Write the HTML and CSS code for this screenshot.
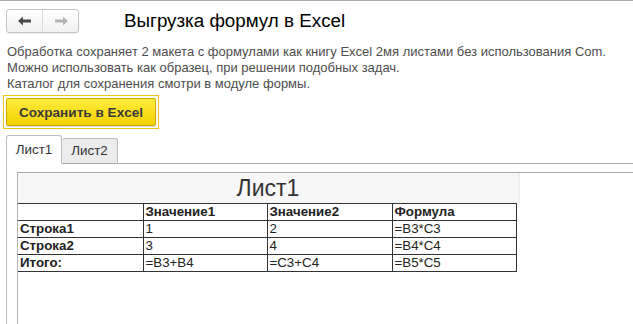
FILE: index.html
```html
<!DOCTYPE html>
<html lang="ru">
<head>
<meta charset="utf-8">
<link rel="stylesheet" href="styles.css">
</head>
<body>
<div class="page">
  <div class="header">
    <div class="nav">
      <span class="nav-btn">
        <svg width="14" height="10" viewBox="0 0 14 10"><path d="M0 5 L5 0.5 L5 3.5 L13 3.5 L13 6.5 L5 6.5 L5 9.5 Z" fill="#4a4a4a"/></svg>
      </span>
      <span class="nav-btn">
        <svg width="14" height="10" viewBox="0 0 14 10"><path d="M14 5 L9 0.5 L9 3.5 L1 3.5 L1 6.5 L9 6.5 L9 9.5 Z" fill="#b4b4b4"/></svg>
      </span>
    </div>
    <h1 class="title">Выгрузка формул в Excel</h1>
  </div>
  <div class="desc">
    <div>Обработка сохраняет 2 макета с формулами как книгу Excel 2мя листами без использования Com.</div>
    <div>Можно использовать как образец, при решении подобных задач.</div>
    <div>Каталог для сохранения смотри в модуле формы.</div>
  </div>
  <div class="focus">
    <button class="save">Сохранить в Excel</button>
  </div>
  <div class="tabs">
    <div class="tab active">Лист1</div>
    <div class="tab">Лист2</div>
    <div class="tab-fill"></div>
  </div>
  <div class="pane">
    <div class="sheet">
      <div class="sheet-head">Лист1</div>
      <table class="grid">
        <colgroup><col class="c0"><col class="c1"><col class="c2"><col class="c3"></colgroup>
        <tr class="b"><td></td><td>Значение1</td><td>Значение2</td><td>Формула</td></tr>
        <tr><td class="b">Строка1</td><td>1</td><td>2</td><td>=B3*C3</td></tr>
        <tr><td class="b">Строка2</td><td>3</td><td>4</td><td>=B4*C4</td></tr>
        <tr><td class="b">Итого:</td><td>=B3+B4</td><td>=C3+C4</td><td>=B5*C5</td></tr>
      </table>
    </div>
  </div>
</div>
</body>
</html>
```
FILE: styles.css
```css
html, body {
  margin: 0;
  padding: 0;
  background: #fff;
}
body {
  font-family: Arial, "Liberation Sans", sans-serif;
  color: #333;
  width: 633px;
  height: 324px;
  overflow: hidden;
}
.page {
  border-top: 1px solid #a9a9a9;
  height: 323px;
  display: flex;
  flex-direction: column;
}
.header {
  display: flex;
  align-items: center;
  padding: 8px 0 0 6px;
}
.nav {
  display: flex;
  width: 73px;
  height: 24px;
  box-sizing: border-box;
  border: 1px solid #c4c4c4;
  border-radius: 3px;
  background: linear-gradient(#ffffff, #f1f1f1);
  box-shadow: 0 1px 1px rgba(0,0,0,0.08);
}
.nav-btn {
  flex: 1;
  display: flex;
  align-items: center;
  justify-content: center;
}
.nav-btn + .nav-btn {
  border-left: 1px solid #dcdcdc;
}
.title {
  margin: 0 0 0 45px;
  font-weight: normal;
  font-size: 18.8px;
  color: #000;
  line-height: 24px;
}
.desc {
  margin-top: 11px;
  padding-left: 7px;
  font-size: 13px;
  line-height: 16px;
  color: #4d4d4d;
}
.focus {
  align-self: flex-start;
  margin: 3px 0 0 3px;
  border: 1px solid #f0c419;
  padding: 2px;
}
.save {
  display: block;
  width: 150px;
  height: 28px;
  border: 1px solid #c9a900;
  border-radius: 2px;
  background: linear-gradient(#ffec3d, #f4d100);
  font-family: Arial, "Liberation Sans", sans-serif;
  font-weight: bold;
  font-size: 13.6px;
  color: #3a3a3a;
  padding: 0;
  box-shadow: 0 1px 1px rgba(0,0,0,0.15);
}
.tabs {
  display: flex;
  align-items: flex-end;
  margin-top: 6px;
  padding-left: 6px;
  height: 29px;
}
.tab {
  box-sizing: border-box;
  width: 56px;
  height: 26px;
  border: 1px solid #bdbdbd;
  border-bottom: 1px solid #a9a9a9;
  border-radius: 3px 3px 0 0;
  background: #ececec;
  font-size: 13.4px;
  color: #333;
  text-align: center;
  line-height: 24px;
}
.tab.active {
  height: 29px;
  background: #fff;
  border-bottom-color: #fff;
  line-height: 27px;
}
.tab + .tab {
  border-left: none;
}
.tab-fill {
  flex: 1;
  border-bottom: 1px solid #a9a9a9;
}
.pane {
  flex: 1;
  margin-left: 6px;
  border-left: 1px solid #bdbdbd;
  padding: 8px 0 0 10px;
}
.sheet {
  height: 100%;
  border-top: 1px solid #a9a9a9;
  border-left: 1px solid #b5b5b5;
}
.sheet-head {
  width: 500px;
  height: 30px;
  background: #f7f7f7;
  border-right: 2px solid #efefef;
  text-align: center;
  font-size: 23px;
  line-height: 30px;
  color: #333;
}
.grid {
  border-collapse: collapse;
  font-size: 13.3px;
  color: #222;
}
.grid td {
  border: 1px solid #333;
  height: 16px;
  padding: 0 0 0 2px;
  line-height: 16px;
  white-space: nowrap;
}
.grid tr td:first-child {
  border-left-width: 0;
}
.c0 { width: 125px; }
.c1 { width: 124px; }
.c2 { width: 125px; }
.c3 { width: 124px; }
.b td, td.b {
  font-weight: bold;
}
```
